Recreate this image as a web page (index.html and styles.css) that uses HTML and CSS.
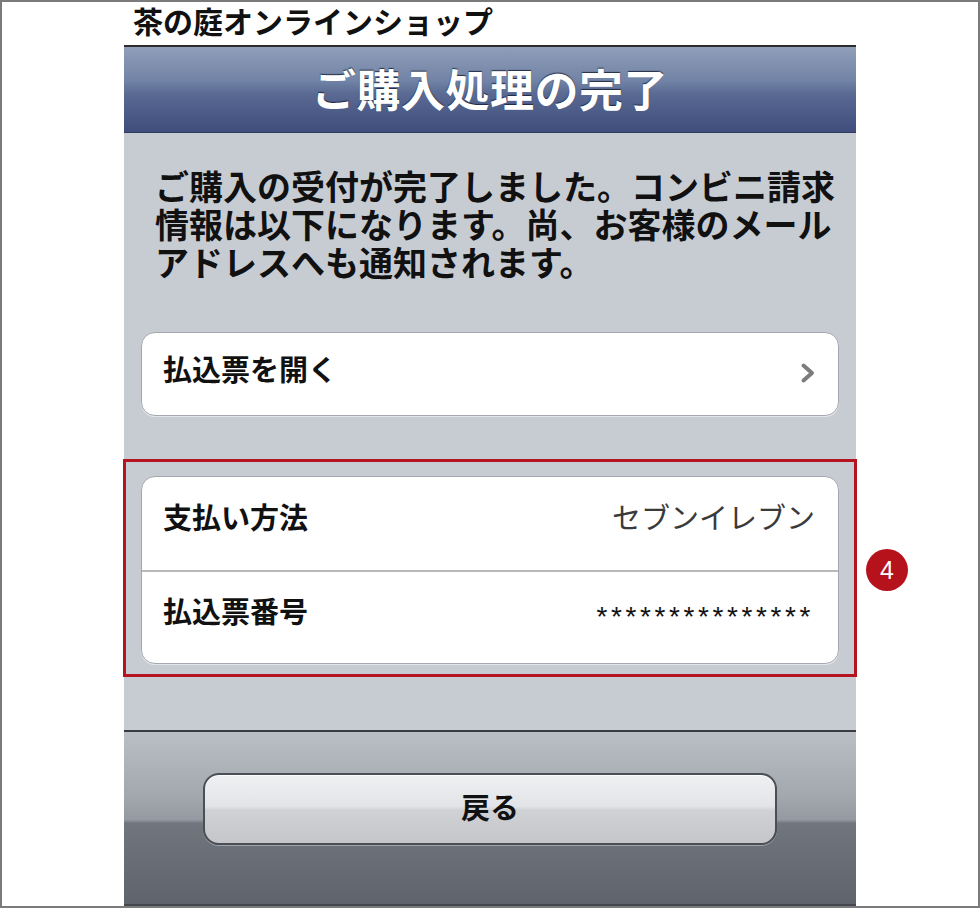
FILE: index.html
```html
<!DOCTYPE html>
<html lang="ja">
<head>
<meta charset="utf-8">
<title>ご購入処理の完了</title>
<link rel="stylesheet" href="styles.css">
</head>
<body>
<div class="frame">
  <div class="phone">
    <div class="site-title">茶の庭オンラインショップ</div>
    <div class="navbar"><h1 class="nav-title">ご購入処理の完了</h1></div>
    <div class="content">
      <p class="message">ご購入の受付が完了しました。コンビニ請求<br>情報は以下になります。尚、お客様のメール<br>アドレスへも通知されます。</p>
      <a class="link-row" href="#">
        <span class="link-label">払込票を開く</span>
        <svg class="chevron" width="16" height="22" viewBox="0 0 16 22"><path d="M3.5 3.5 L12 11 L3.5 18.5" fill="none" stroke="#7c7c7c" stroke-width="4" stroke-linecap="round" stroke-linejoin="round"/></svg>
      </a>
      <div class="highlight">
        <div class="cell-group">
          <div class="cell"><span class="label">支払い方法</span><span class="value">セブンイレブン</span></div>
          <div class="cell cell-second"><span class="label">払込票番号</span><span class="value mask">***************</span></div>
        </div>
      </div>
    </div>
    <div class="toolbar"><button class="back" type="button">戻る</button></div>
  </div>
  <div class="badge">4</div>
</div>
</body>
</html>
```

FILE: styles.css
```css
html, body {
  margin: 0;
  padding: 0;
  background: #fff;
}

.frame {
  position: relative;
  width: 980px;
  height: 908px;
  box-sizing: border-box;
  border: 2px solid #7b7b7b;
  background: #fff;
  font-family: "Noto Sans CJK JP", "Noto Sans", sans-serif;
}

.phone {
  margin-left: 122px;
  width: 732px;
  height: 904px;
  display: flex;
  flex-direction: column;
}

.site-title {
  height: 43px;
  box-sizing: border-box;
  padding-top: 1px;
  padding-left: 9px;
  font-weight: 700;
  font-size: 30px;
  line-height: 34px;
  color: #111;
  white-space: nowrap;
}

.navbar {
  height: 88px;
  box-sizing: border-box;
  border-top: 2px solid #2b2b2d;
  border-bottom: 1px solid #2f3a5c;
  background: linear-gradient(#909eb8 0%, #7183a6 40%, #5a6a93 55%, #3e4d7c 100%);
  display: flex;
  align-items: center;
  justify-content: center;
  padding-bottom: 4px;
}

.nav-title {
  margin: 0;
  font-weight: 700;
  font-size: 44px;
  line-height: 50px;
  color: #fff;
  text-shadow: 0 -1px 1px rgba(20, 28, 50, 0.85);
  letter-spacing: 0.5px;
}

.content {
  height: 597px;
  box-sizing: border-box;
  background: #c7ccd3;
  padding: 34px 17px 0 17px;
}

.message {
  margin: 0 0 0 14px;
  font-weight: 700;
  font-size: 34px;
  line-height: 38px;
  color: #111;
  white-space: nowrap;
}

.link-row {
  margin-top: 51px;
  height: 84px;
  box-sizing: border-box;
  border: 1px solid #a4a8ae;
  border-radius: 14px;
  background: #fff;
  box-shadow: 0 1px 0 rgba(255, 255, 255, 0.5);
  display: flex;
  align-items: center;
  justify-content: space-between;
  padding: 0 22px 12px 21px;
  text-decoration: none;
  color: #111;
  font-weight: 700;
  font-size: 29px;
}

.chevron {
  display: block;
  margin-top: 10px;
}

.highlight {
  margin: 43px -18px 0 -18px;
  border: 3px solid #b4141f;
  padding: 14px 15px 10px 15px;
}

.cell-group {
  border: 1px solid #a4a8ae;
  border-radius: 14px;
  background: #fff;
  overflow: hidden;
  box-shadow: 0 1px 0 rgba(255, 255, 255, 0.5);
}

.cell {
  height: 93px;
  box-sizing: border-box;
  display: flex;
  align-items: center;
  justify-content: space-between;
  padding: 0 23px 15px 21px;
}

.cell-second {
  height: 93px;
  border-top: 2px solid #b9b9b9;
}

.label {
  font-weight: 700;
  font-size: 29px;
  color: #111;
}

.value {
  font-weight: 400;
  font-size: 29px;
  color: #3a3a3a;
}

.mask {
  font-family: "Liberation Sans", sans-serif;
  font-size: 28px;
  letter-spacing: 3.6px;
  margin-right: 1px;
  color: #111;
  padding-top: 14px;
}

.toolbar {
  flex: 1;
  box-sizing: border-box;
  border-top: 2px solid #3a3c40;
  border-bottom: 2px solid #45484e;
  background: linear-gradient(#babec5 0%, #a3a7ae 37%, #959aa2 51%, #71757d 53%, #5f636b 100%);
  padding-top: 41px;
  display: flex;
  justify-content: center;
  align-items: flex-start;
}

.back {
  width: 574px;
  height: 72px;
  box-sizing: border-box;
  border: 2px solid #4a4e56;
  border-radius: 16px;
  background: linear-gradient(#eef0f2 0%, #e2e4e7 46%, #cfd1d4 52%, #c4c6c9 100%);
  box-shadow: 0 1px 0 rgba(255, 255, 255, 0.35), inset 0 1px 0 rgba(255, 255, 255, 0.8);
  font-family: "Noto Sans CJK JP", "Noto Sans", sans-serif;
  font-weight: 700;
  font-size: 29px;
  color: #111;
  padding: 0 0 6px 0;
}

.badge {
  position: absolute;
  left: 864px;
  top: 547px;
  width: 42px;
  height: 42px;
  border-radius: 50%;
  background: #b5121b;
  color: #fff;
  font-family: "Liberation Sans", Arial, sans-serif;
  font-size: 25px;
  line-height: 42px;
  text-align: center;
}
```
